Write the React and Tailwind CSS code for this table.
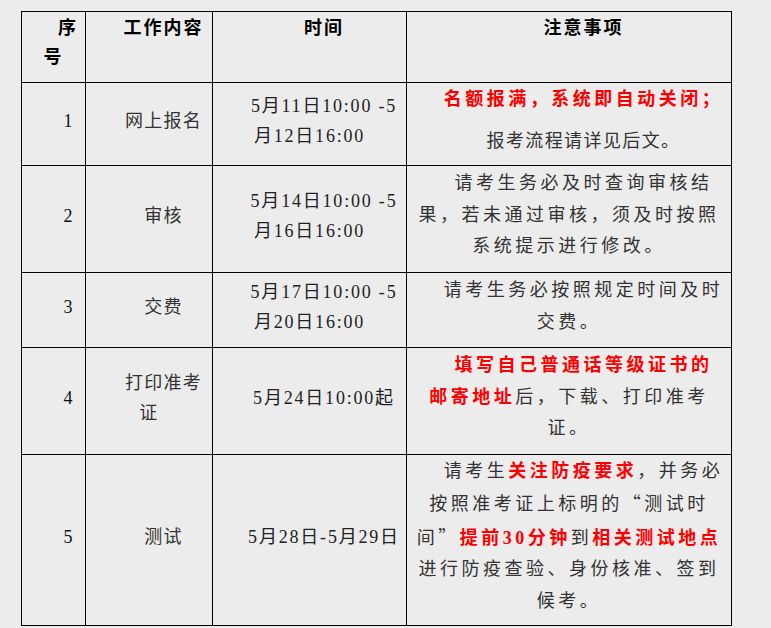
const font = "font-['Liberation_Serif','Noto_Sans_CJK_SC',serif]";

function Red({ children }) {
  return <span className="font-semibold text-[#ff0000]">{children}</span>;
}

function Q({ children }) {
  return <span className="font-['Noto_Sans_CJK_SC',sans-serif]">{children}</span>;
}

export default function App() {
  const td = "border border-black align-middle text-center indent-[29px] pb-[7px] whitespace-nowrap";
  const seq = td + " leading-[30px] text-[#111]";
  const work = td + " leading-[30px] tracking-[1.3px] text-[#333]";
  const time = td + " leading-[30px] tracking-[1.8px] text-[#222]";
  const note = td + " leading-[31.5px] tracking-[3.5px] text-[#333]";
  const th = "border border-black align-top text-center indent-[29px] pt-[2px] leading-[29px] font-bold tracking-[2px] text-black whitespace-nowrap";

  return (
    <div className={"w-[771px] h-[628px] bg-[#ececec] pt-[11px] pl-[21px] text-[18px] " + font}>
      <table className="table-fixed border-collapse w-[711px]">
        <colgroup>
          <col className="w-[64px]" />
          <col className="w-[127px]" />
          <col className="w-[194px]" />
          <col className="w-[325px]" />
        </colgroup>
        <tbody>
          <tr className="h-[71px]">
            <td className={th}>序<br />号</td>
            <td className={th}>工作内容</td>
            <td className={th}>时间</td>
            <td className={th}>注意事项</td>
          </tr>
          <tr className="h-[83px]">
            <td className={seq}>1</td>
            <td className={work}>网上报名</td>
            <td className={time}>5月11日10:00 -5<br />月12日16:00</td>
            <td className={td + " text-[#333]"}>
              <div className="leading-[31px] mb-[11px] tracking-[3.5px]">
                <Red>名额报满，系统即自动关闭；</Red>
              </div>
              <div className="leading-[31px] tracking-[1.4px]">报考流程请详见后文。</div>
            </td>
          </tr>
          <tr className="h-[107px]">
            <td className={seq}>2</td>
            <td className={work}>审核</td>
            <td className={time}>5月14日10:00 -5<br />月16日16:00</td>
            <td className={note}>
              请考生务必及时查询审核结<br />果，若未通过审核，须及时按照<br />系统提示进行修改。
            </td>
          </tr>
          <tr className="h-[75px]">
            <td className={seq}>3</td>
            <td className={work}>交费</td>
            <td className={time}>5月17日10:00 -5<br />月20日16:00</td>
            <td className={note}>
              请考生务必按照规定时间及时<br />交费。
            </td>
          </tr>
          <tr className="h-[107px]">
            <td className={seq}>4</td>
            <td className={work}>打印准考<br />证</td>
            <td className={time}>5月24日10:00起</td>
            <td className={note}>
              <Red>填写自己普通话等级证书的</Red><br />
              <Red>邮寄地址</Red>后，下载、打印准考<br />证。
            </td>
          </tr>
          <tr className="h-[171px]">
            <td className={seq}>5</td>
            <td className={work}>测试</td>
            <td className={time}>5月28日-5月29日</td>
            <td className={note}>
              请考生<Red>关注防疫要求</Red>，并务必<br />
              按照准考证上标明的<Q>“</Q>测试时<br />
              间<Q>”</Q><Red>提前30分钟</Red>到<Red>相关测试地点</Red><br />
              进行防疫查验、身份核准、签到<br />
              候考。
            </td>
          </tr>
        </tbody>
      </table>
    </div>
  );
}
